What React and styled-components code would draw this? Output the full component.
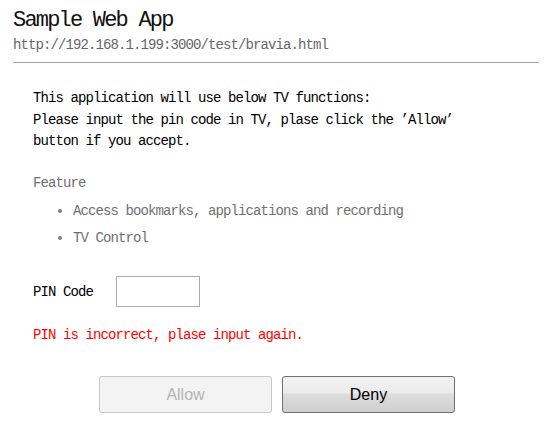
import React from "react";
import styled, { createGlobalStyle } from "styled-components";

const GlobalStyle = createGlobalStyle`
  html, body {
    margin: 0;
    padding: 0;
    background: #ffffff;
  }
  body {
    font-family: "Liberation Mono", "DejaVu Sans Mono", monospace;
    color: #000;
  }
`;

const Page = styled.main`
  width: 552px;
  padding: 0 13px;
  box-sizing: border-box;
`;

const Header = styled.header`
  padding-top: 8px;
  border-bottom: 1px solid #a0a0a0;
  padding-bottom: 6px;
`;

const Title = styled.h1`
  margin: 0;
  font-family: "Liberation Mono", monospace;
  font-weight: normal;
  font-size: 22px;
  letter-spacing: -1.8px;
  line-height: 26px;
  color: #111;
`;

const Url = styled.div`
  font-size: 14px;
  letter-spacing: -0.9px;
  line-height: 22px;
  color: #666;
`;

const Content = styled.section`
  padding: 0 0 0 20px;
  font-size: 14px;
  letter-spacing: -0.9px;
`;

const Intro = styled.p`
  margin: 25px 0 0;
  line-height: 21.5px;
  color: #000;
`;

const FeatureTitle = styled.div`
  margin-top: 20.5px;
  line-height: 21.5px;
  color: #707070;
`;

const FeatureList = styled.ul`
  margin: 3px 0 0;
  padding-left: 40px;
  list-style: none;
  color: #707070;
`;

const FeatureItem = styled.li`
  position: relative;
  line-height: 27px;

  &::before {
    content: "";
    position: absolute;
    left: -15px;
    top: 11.5px;
    width: 4px;
    height: 4px;
    border-radius: 50%;
    background: #808080;
  }
`;

const PinRow = styled.div`
  margin-top: 24.5px;
  display: flex;
  align-items: center;
  gap: 23px;
`;

const PinLabel = styled.label`
  line-height: 21.5px;
  padding-top: 3px;
  color: #000;
`;

const PinInput = styled.input`
  width: 84px;
  height: 31px;
  box-sizing: border-box;
  border: 1px solid #ababab;
  padding: 2px 4px;
  font-family: "Liberation Mono", monospace;
  font-size: 14px;
  outline: none;
`;

const ErrorText = styled.div`
  margin-top: 17.5px;
  line-height: 21.5px;
  color: #ff0000;
`;

const Actions = styled.div`
  margin: 29.5px 0 0 -18px;
  display: flex;
  justify-content: center;
  gap: 10px;
`;

const Button = styled.button`
  width: 173px;
  height: 37px;
  box-sizing: border-box;
  border-radius: 3px;
  font-family: "Liberation Sans", Arial, sans-serif;
  font-size: 16px;
  letter-spacing: 0;
  padding-top: 2px;
  cursor: pointer;
  border: 1px solid ${(p) => (p.disabled ? "#c8c8c8" : "#707070")};
  color: ${(p) => (p.disabled ? "#b3b3b3" : "#000")};
  background: ${(p) =>
    p.disabled
      ? "#f3f3f3"
      : "linear-gradient(to bottom, #f2f2f2 0%, #ebebeb 45%, #dddddd 50%, #cfcfcf 100%)"};
`;

export default function App() {
  return (
    <>
      <GlobalStyle />
      <Page>
        <Header>
          <Title>Sample Web App</Title>
          <Url>http://192.168.1.199:3000/test/bravia.html</Url>
        </Header>
        <Content>
          <Intro>
            This application will use below TV functions:
            <br />
            Please input the pin code in TV, plase click the ’Allow’
            <br />
            button if you accept.
          </Intro>
          <FeatureTitle>Feature</FeatureTitle>
          <FeatureList>
            <FeatureItem>Access bookmarks, applications and recording</FeatureItem>
            <FeatureItem>TV Control</FeatureItem>
          </FeatureList>
          <PinRow>
            <PinLabel htmlFor="pin">PIN Code</PinLabel>
            <PinInput id="pin" type="text" />
          </PinRow>
          <ErrorText>PIN is incorrect, plase input again.</ErrorText>
          <Actions>
            <Button disabled>Allow</Button>
            <Button>Deny</Button>
          </Actions>
        </Content>
      </Page>
    </>
  );
}
